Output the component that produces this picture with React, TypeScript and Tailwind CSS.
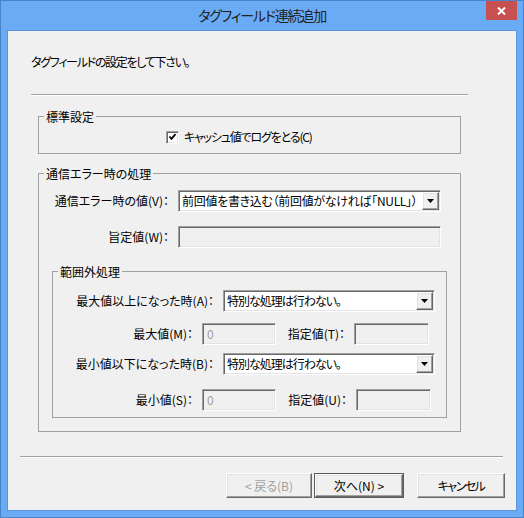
import type { ReactNode } from 'react'

const sunken =
  'border border-t-[#a0a0a0] border-l-[#a0a0a0] border-r-white border-b-white shadow-[inset_1px_1px_0_#696969,inset_-1px_-1px_0_#e3e3e3]'
const raised =
  'border border-t-white border-l-white border-r-[#696969] border-b-[#696969] shadow-[inset_-1px_-1px_0_#a0a0a0,inset_1px_1px_0_#e3e3e3]'

function Combo({ width, text, tracking }: { width: string; text: string; tracking: string }) {
  return (
    <div className={`${sunken} ${width} h-[22px] p-[1px] bg-white flex items-stretch`}>
      <span className={`flex-1 pl-[2px] leading-[18px] ${tracking} whitespace-nowrap overflow-hidden`}>{text}</span>
      <span className={`${raised} w-[17px] bg-[#f0f0f0] flex items-center justify-center`}>
        <svg width="7" height="4" viewBox="0 0 7 4">
          <polygon points="0,0 7,0 3.5,4" fill="#000" />
        </svg>
      </span>
    </div>
  )
}

function Field({ width, value }: { width: string; value?: string }) {
  return (
    <div className={`${sunken} ${width} h-[22px] bg-[#f0f0f0] pl-[4px] leading-[20px] text-[#a0a0a0]`}>
      {value}
    </div>
  )
}

function Group({ title, className, children }: { title: string; className: string; children: ReactNode }) {
  return (
    <fieldset className={`border border-[#a0a0a0] ${className}`}>
      <legend className="ml-[5px] px-[2px] h-[17px] leading-[17px]">{title}</legend>
      {children}
    </fieldset>
  )
}

function Button({ children, disabled, isDefault, width }: { children: ReactNode; disabled?: boolean; isDefault?: boolean; width: string }) {
  const inner = (
    <div
      className={`${raised} h-full bg-[#f0f0f0] flex items-center justify-center ${disabled ? 'text-[#a0a0a0]' : 'text-black'}`}
    >
      {children}
    </div>
  )
  if (isDefault) {
    return <div className={`${width} h-[25px] border border-[#5a5a5a]`}>{inner}</div>
  }
  return <div className={`${width} h-[25px]`}>{inner}</div>
}

export default function App() {
  return (
    <div className="w-[524px] h-[518px] border border-[#4a84c8] bg-[#6aabf5] flex flex-col font-['Noto_Sans_CJK_JP',sans-serif] [font-feature-settings:'palt'] text-[12px] leading-[16px] text-black">
      {/* title bar */}
      <div className="h-[29px] flex">
        <div className="w-[37px]" />
        <div className="flex-1 text-center text-[14px] tracking-[-1.2px] leading-[29px] text-[#222]">タグフィールド連続追加</div>
        <div className="w-[37px]">
          <div className="w-[31px] h-[19px] bg-[#c75050] flex items-center justify-center">
            <svg width="9" height="8" viewBox="0 0 9 8">
              <path d="M1 0.5 L8 7.5 M8 0.5 L1 7.5" stroke="#fff" strokeWidth="2" />
            </svg>
          </div>
        </div>
      </div>

      {/* client area */}
      <div className="mx-[6px] h-[481px] border border-[#5b95d9] bg-[#f0f0f0] flex flex-col">
        <div className="mt-[23px] ml-[23px] h-[16px] tracking-[-1.3px]">タグフィールドの設定をして下さい。</div>
        <div className="mt-[24px] ml-[23px] w-[437px] border-t border-t-[#a0a0a0] border-b border-b-white" />

        <Group title="標準設定" className="mt-[12px] ml-[30px] w-[423px] pt-[4px] pb-[8px]">
          <div className="flex items-center h-[16px] pl-[127px]">
            <span className={`${sunken} w-[13px] h-[13px] bg-white flex items-center justify-center`}>
              <svg width="9" height="8" viewBox="0 0 9 8">
                <polyline points="1.5,3.5 3.5,5.8 7.5,1.2" fill="none" stroke="#000" strokeWidth="1.8" />
              </svg>
            </span>
            <span className="ml-[5px] tracking-[-1.2px]">キャッシュ値でログをとる(C)</span>
          </div>
        </Group>

        <Group title="通信エラー時の処理" className="mt-[11px] ml-[30px] w-[423px] pt-[8px] pb-[13px]">
          <div className="flex items-center">
            <div className="w-[139px] pr-[9px] text-right">通信エラー時の値(V)：</div>
            <Combo width="w-[263px]" tracking="tracking-[-0.3px]" text="前回値を書き込む（前回値がなければ「NULL」）" />
          </div>
          <div className="flex items-center mt-[14px]">
            <div className="w-[139px] pr-[9px] text-right">旨定値(W)：</div>
            <Field width="w-[263px]" />
          </div>

          <Group title="範囲外処理" className="mt-[15px] ml-[13px] w-[395px] pt-[10px] pb-[6px]">
            <div className="flex items-center">
              <div className="w-[170px] pr-[9px] text-right">最大値以上になった時(A)：</div>
              <Combo width="w-[212px]" tracking="tracking-[-1px]" text="特別な処理は行わない。" />
            </div>
            <div className="flex items-center mt-[11px]">
              <div className="w-[149px] pr-[9px] text-right">最大値(M)：</div>
              <Field width="w-[74px]" value="0" />
              <div className="w-[78px] pr-[9px] text-right">指定値(T)：</div>
              <Field width="w-[75px]" />
            </div>
            <div className="flex items-center mt-[8px]">
              <div className="w-[170px] pr-[9px] text-right">最小値以下になった時(B)：</div>
              <Combo width="w-[212px]" tracking="tracking-[-1px]" text="特別な処理は行わない。" />
            </div>
            <div className="flex items-center mt-[14px]">
              <div className="w-[149px] pr-[9px] text-right">最小値(S)：</div>
              <Field width="w-[74px]" value="0" />
              <div className="w-[80px] pr-[9px] text-right">指定値(U)：</div>
              <Field width="w-[75px]" />
            </div>
          </Group>
        </Group>

        <div className="mt-[24px] ml-[12px] w-[483px] border-t border-t-[#a0a0a0] border-b border-b-white" />

        <div className="mt-[15px] pr-[11px] flex justify-end">
          <Button width="w-[86px]" disabled>
            &lt;&nbsp;戻る(B)
          </Button>
          <div className="ml-[2px]">
            <Button width="w-[90px]" isDefault>
              次へ(N)&nbsp;&gt;
            </Button>
          </div>
          <div className="ml-[13px]">
            <Button width="w-[88px]">
              <span className="tracking-[-1.5px]">キャンセル</span>
            </Button>
          </div>
        </div>
      </div>
    </div>
  )
}
